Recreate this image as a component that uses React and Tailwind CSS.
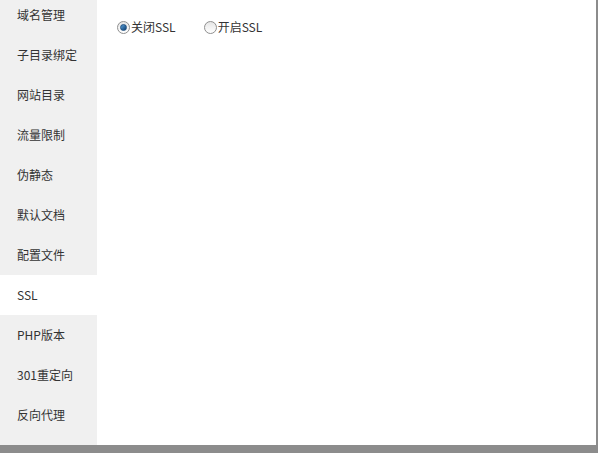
import React from "react";

const items = ["域名管理","子目录绑定","网站目录","流量限制","伪静态","默认文档","配置文件","SSL","PHP版本","301重定向","反向代理"];

function Radio({ checked }) {
  return (
    <span className="inline-flex items-center justify-center w-[13px] h-[13px] rounded-full border border-[#8f8f8f] bg-gradient-to-b from-[#e6e6e6] to-[#ffffff]">
      {checked && <span className="block w-[7px] h-[7px] rounded-full bg-gradient-to-br from-[#5aa0d8] to-[#0c3f73] border border-[#1d4f80]"></span>}
    </span>
  );
}

export default function App() {
  return (
    <div className="w-[598px] h-[453px] bg-[#8c8c8c] overflow-hidden" style={{ fontFamily: '"Microsoft YaHei","Noto Sans CJK SC","Noto Sans",sans-serif' }}>
      <div className="w-[596px] h-[445px] bg-white flex overflow-hidden">
        <div className="w-[97px] bg-[#f0f0f0] overflow-hidden">
          <div className="-mt-[5px] flex flex-col">
            {items.map((t) => (
              <div key={t} className={`h-10 pl-[17px] flex items-center text-[12px] text-[#333] ${t === "SSL" ? "bg-white" : ""}`}>{t}</div>
            ))}
          </div>
        </div>
        <div className="flex-1 pl-5 pt-[20px]">
          <div className="flex items-center text-[12px] text-[#333] h-[14px]">
            <label className="flex items-center gap-[1px]"><Radio checked />关闭SSL</label>
            <label className="flex items-center gap-[1px] ml-[28px]"><Radio />开启SSL</label>
          </div>
        </div>
      </div>
    </div>
  );
}
